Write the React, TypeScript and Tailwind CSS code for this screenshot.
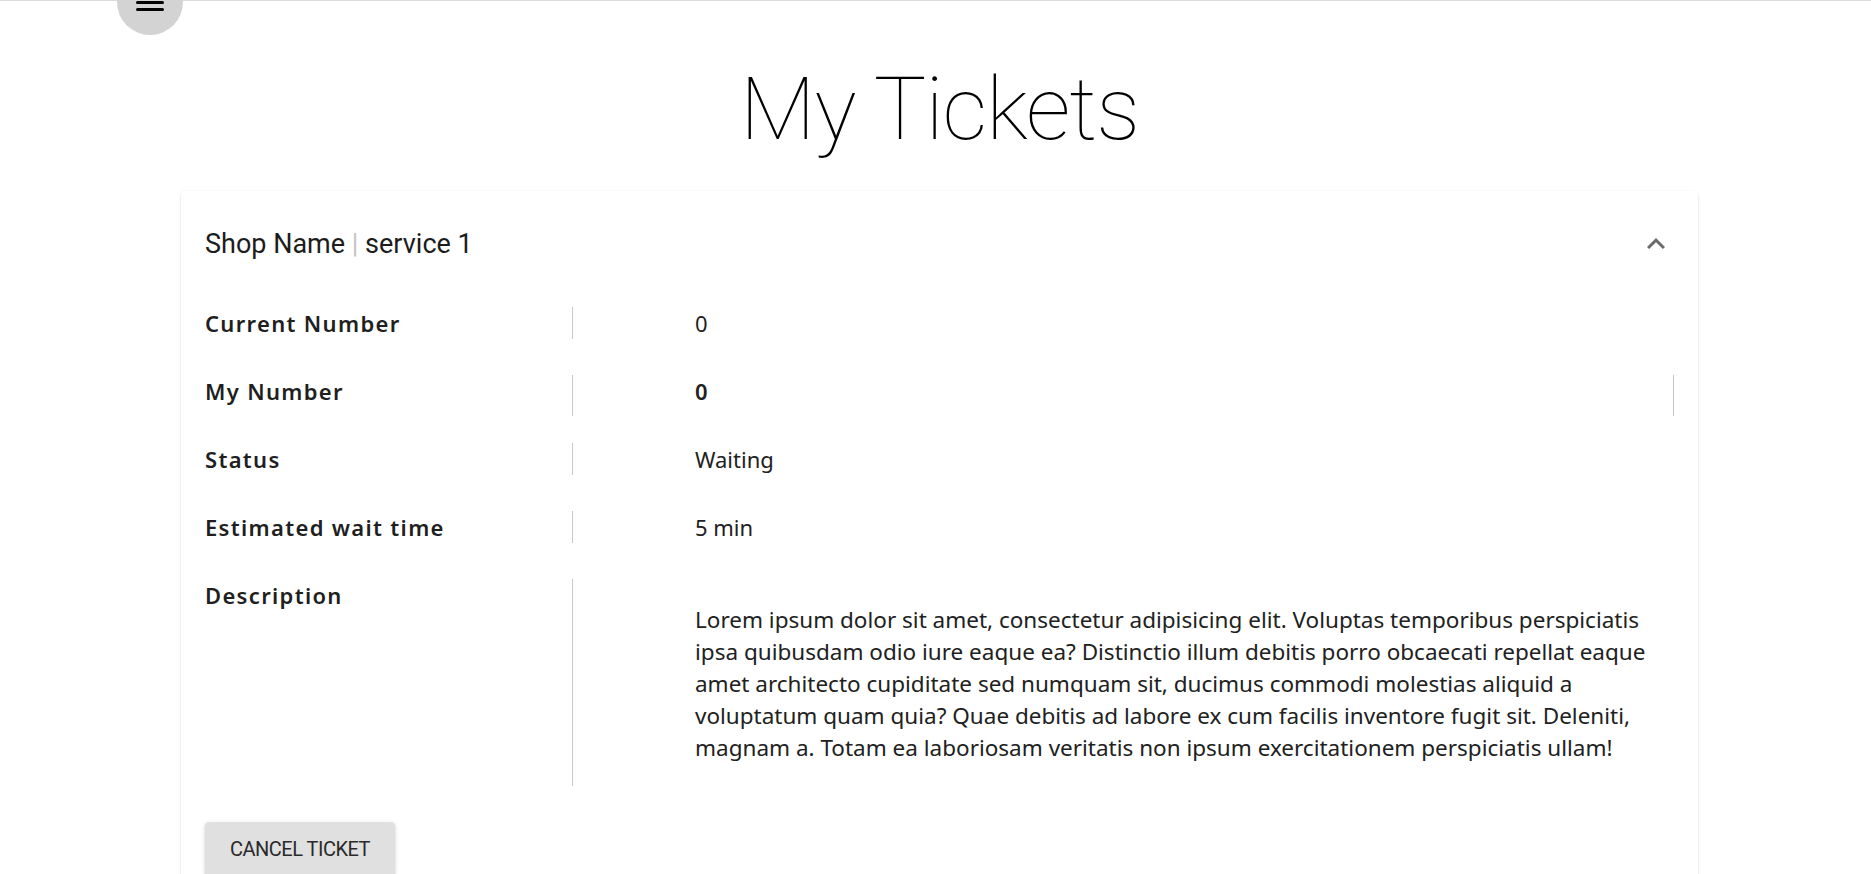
import React from "react";

const rows = [
  { label: "Current Number", value: "0" },
  { label: "My Number", value: "0", bold: true, edge: true },
  { label: "Status", value: "Waiting" },
  { label: "Estimated wait time", value: "5 min" },
];

const lorem =
  "Lorem ipsum dolor sit amet, consectetur adipisicing elit. Voluptas temporibus perspiciatis ipsa quibusdam odio iure eaque ea? Distinctio illum debitis porro obcaecati repellat eaque amet architecto cupiditate sed numquam sit, ducimus commodi molestias aliquid a voluptatum quam quia? Quae debitis ad labore ex cum facilis inventore fugit sit. Deleniti, magnam a. Totam ea laboriosam veritatis non ipsum exercitationem perspiciatis ullam!";

const ExpandLess = () => (
  <svg width="36" height="36" viewBox="0 0 24 24" fill="#6b6b6b">
    <path d="M7.41 15.41 12 10.83l4.59 4.58L18 14l-6-6-6 6z" />
  </svg>
);

export default function App() {
  return (
    <div className="relative min-h-screen bg-white font-['Noto_Sans',sans-serif] text-[#212121]">
      {/* top bar, scrolled mostly out of view */}
      <div className="h-px bg-[#dcdcdc]" />
      <button className="absolute left-[117px] top-[-31px] flex h-[66px] w-[66px] items-end justify-center rounded-full bg-[#d3d3d3] pb-[24px]">
        <span className="flex w-[28px] flex-col gap-[4px]">
          <span className="h-[3px] w-full rounded bg-black" />
          <span className="h-[3px] w-full rounded bg-black" />
          <span className="h-[3px] w-full rounded bg-black" />
        </span>
      </button>

      <div className="ml-[181px] w-[1517px]">
        <h1 className="mt-[64px] text-center font-['Roboto',sans-serif] text-[88px] font-thin leading-[88px] tracking-[-1px] text-black">
          My Tickets
        </h1>

        <div className="mt-[38px] rounded bg-white px-[24px] pb-10 pt-[37px] shadow-[0_2px_1px_-1px_rgba(0,0,0,0.2),0_1px_1px_0_rgba(0,0,0,0.14),0_1px_3px_0_rgba(0,0,0,0.12)]">
          <div className="flex h-8 items-center justify-between">
            <h2 className="font-['Roboto',sans-serif] text-[27px] leading-8 text-[#1c1c1c]">
              Shop Name <span className="text-[#c4c4c4]">|</span> service 1
            </h2>
            <ExpandLess />
          </div>

          <div className="mt-[47px] flex flex-col gap-[36px]">
            {rows.map((r) => (
              <div key={r.label} className="grid h-8 grid-cols-[367px_1fr]">
                <div className="text-[22px] font-semibold leading-8 tracking-[0.06em] text-[#1f1f1f]">
                  {r.label}
                </div>
                <div className="flex items-start justify-between border-l border-[#c8c8c8] pl-[122px]">
                  <span className={`text-[22px] leading-8 ${r.bold ? "font-semibold" : ""}`}>
                    {r.value}
                  </span>
                  {r.edge && <span className="h-[41px] w-px bg-[#c8c8c8]" />}
                </div>
              </div>
            ))}
            <div className="grid grid-cols-[367px_1fr]">
              <div className="text-[22px] font-semibold leading-8 tracking-[0.06em] text-[#1f1f1f]">
                Description
              </div>
              <div className="border-l border-[#c8c8c8] pb-[22px] pl-[122px] pt-[25px]">
                <p className="text-[22.5px] leading-8">{lorem}</p>
              </div>
            </div>
          </div>

          <button className="mt-[36px] flex h-[54px] items-center rounded bg-[#e0e0e0] px-[25px] font-['Roboto',sans-serif] text-[20px] tracking-[-0.5px] text-[#2a2a2a] shadow-[0_3px_1px_-2px_rgba(0,0,0,0.2),0_2px_2px_0_rgba(0,0,0,0.14),0_1px_5px_0_rgba(0,0,0,0.12)]">
            CANCEL TICKET
          </button>
        </div>
      </div>
    </div>
  );
}
